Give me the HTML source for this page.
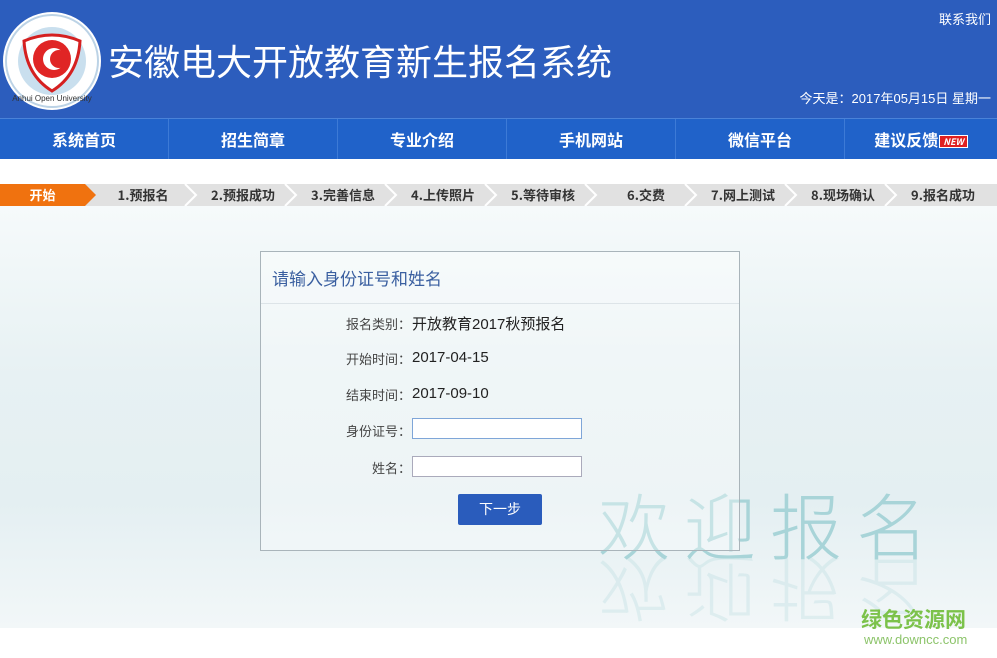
<!DOCTYPE html>
<html><head><meta charset="utf-8"><style>
*{margin:0;padding:0;box-sizing:border-box}
body{width:997px;height:658px;overflow:hidden;background:#fff;font-family:"Liberation Sans","Microsoft YaHei","Noto Sans CJK SC",sans-serif;position:relative}
.hd{position:absolute;left:0;top:0;width:997px;height:118px;background:#2c5dbd}
.title{position:absolute;left:108px;top:34px;color:#fff;font-size:36px;font-family:"Noto Sans CJK SC",sans-serif}
.lx{position:absolute;right:6px;top:9px;color:#fff;font-size:13px;font-family:"Noto Sans CJK SC",sans-serif}
.dt{position:absolute;right:6px;top:88px;color:#fff;font-size:13px;font-family:"Liberation Sans","Noto Sans CJK SC",sans-serif}
.nav{position:absolute;left:0;top:118px;width:997px;height:41px;background:#2062c9;border-top:1px solid #4a82d8;display:flex}
.nav div{width:169px;text-align:center;color:#fff;font-weight:bold;font-size:16px;line-height:40px;border-right:1px solid #3d7ad6;font-family:"Noto Sans CJK SC",sans-serif}
.nav div:last-child{border-right:none;width:152px}
.new{display:inline-block;background:#e02020;color:#fff;font-size:9px;font-style:italic;line-height:11px;padding:0 3px;vertical-align:middle;border:1px solid #fff;margin-left:1px}
.bg{position:absolute;left:0;top:206px;width:997px;height:422px;background:linear-gradient(180deg,#f6fafb 0%,#e7f1f3 40%,#e4eff2 70%,#f2f7f8 100%)}
.steps{position:absolute;left:0;top:184px;width:997px;height:22px;background:#e1e1e1}
.st{position:absolute;top:0;height:22px;line-height:22px;font-size:13px;font-weight:bold;color:#333;text-align:center;font-family:"Noto Sans CJK SC",sans-serif}
.box{position:absolute;left:260px;top:251px;width:480px;height:300px;border:1px solid #a9b4ba;background:rgba(255,255,255,0.35)}
.box h3{font-weight:normal;color:#3a5fa0;font-size:17px;height:52px;line-height:52px;padding-left:11px;border-bottom:1px solid #dde4e8;font-family:"Noto Sans CJK SC",sans-serif}
.lab{position:absolute;width:150px;text-align:right;font-size:13px;color:#444;font-family:"Noto Sans CJK SC",sans-serif}
.val{position:absolute;left:151px;font-size:15px;color:#222;font-family:"Liberation Sans","Noto Sans CJK SC",sans-serif}
.inp{position:absolute;left:151px;width:170px;height:21px;background:#fff;border:1px solid #aab}
.btn{position:absolute;left:197px;top:242px;width:84px;height:31px;background:#2a5cbc;color:#fff;font-size:14px;text-align:center;line-height:31px;border-radius:2px;font-family:"Noto Sans CJK SC",sans-serif}
.wm{position:absolute;left:598px;top:470px;font-size:72px;color:#a8d4d8;letter-spacing:14px;font-family:"Noto Sans CJK SC",sans-serif;font-weight:300}
.wm2{position:absolute;left:598px;top:540px;font-size:72px;color:#a8d4d8;opacity:.25;letter-spacing:14px;transform:scaleY(-1);font-family:"Noto Sans CJK SC",sans-serif;font-weight:300}
</style></head><body>
<div class="hd">
<svg style="position:absolute;left:2px;top:11px" width="100" height="100" viewBox="0 0 100 100">
<circle cx="50" cy="50" r="49" fill="#fff"/>
<circle cx="50" cy="50" r="46" fill="none" stroke="#bcd3e6" stroke-width="2"/>
<circle cx="50" cy="50" r="34" fill="#c9dfee"/>
<path d="M22 30 Q50 18 78 30 Q76 64 50 80 Q24 64 22 30Z" fill="#fff" stroke="#d52020" stroke-width="3"/>
<circle cx="50" cy="48" r="19" fill="#e02525"/>
<circle cx="52" cy="48" r="11" fill="#fff"/>
<circle cx="57" cy="48" r="9" fill="#e02525"/>
<text x="50" y="90" font-size="8" fill="#333" text-anchor="middle" font-family="Liberation Sans">Anhui Open University</text>
</svg>
<div class="title">安徽电大开放教育新生报名系统</div>
<div class="lx">联系我们</div>
<div class="dt">今天是：2017年05月15日 星期一</div>
</div>
<div class="nav"><div>系统首页</div><div>招生简章</div><div>专业介绍</div><div>手机网站</div><div>微信平台</div><div>建议反馈<span class="new">NEW</span></div></div>
<div class="bg"></div>
<div class="steps">
<svg style="position:absolute;left:0;top:0" width="997" height="22">
<path d="M0 0H85L96 11L85 22H0Z" fill="#f0720f"/>
<g fill="none" stroke="#fff" stroke-width="2">
<path d="M185 0L196 11L185 22M285 0L296 11L285 22M385 0L396 11L385 22M485 0L496 11L485 22M585 0L596 11L585 22M685 0L696 11L685 22M785 0L796 11L785 22M885 0L896 11L885 22"/></g></svg>
<div class="st" style="left:0;width:85px;color:#fff">开始</div>
<div class="st" style="left:96px;width:94px">1.预报名</div>
<div class="st" style="left:196px;width:94px">2.预报成功</div>
<div class="st" style="left:296px;width:94px">3.完善信息</div>
<div class="st" style="left:396px;width:94px">4.上传照片</div>
<div class="st" style="left:496px;width:94px">5.等待审核</div>
<div class="st" style="left:596px;width:100px">6.交费</div>
<div class="st" style="left:696px;width:94px">7.网上测试</div>
<div class="st" style="left:796px;width:94px">8.现场确认</div>
<div class="st" style="left:896px;width:94px">9.报名成功</div>
</div>
<div class="wm">欢迎报名</div>
<div class="wm2">欢迎报名</div>
<div class="box">
<h3>请输入身份证号和姓名</h3>
<div class="lab" style="top:62px">报名类别：</div><div class="val" style="top:61px">开放教育2017秋预报名</div>
<div class="lab" style="top:97px">开始时间：</div><div class="val" style="top:97px">2017-04-15</div>
<div class="lab" style="top:133px">结束时间：</div><div class="val" style="top:133px">2017-09-10</div>
<div class="lab" style="top:169px">身份证号：</div><div class="inp" style="top:166px;border-color:#7fa6d8"></div>
<div class="lab" style="top:206px">姓名：</div><div class="inp" style="top:204px"></div>
<div class="btn">下一步</div>
</div>
<div style="position:absolute;left:861px;top:604px;font-size:21px;color:#7cc24a;font-weight:bold;font-family:'Noto Sans CJK SC',sans-serif">绿色资源网</div>
<div style="position:absolute;left:864px;top:632px;font-size:13px;color:#8cc46a">www.downcc.com</div>
</body></html>
